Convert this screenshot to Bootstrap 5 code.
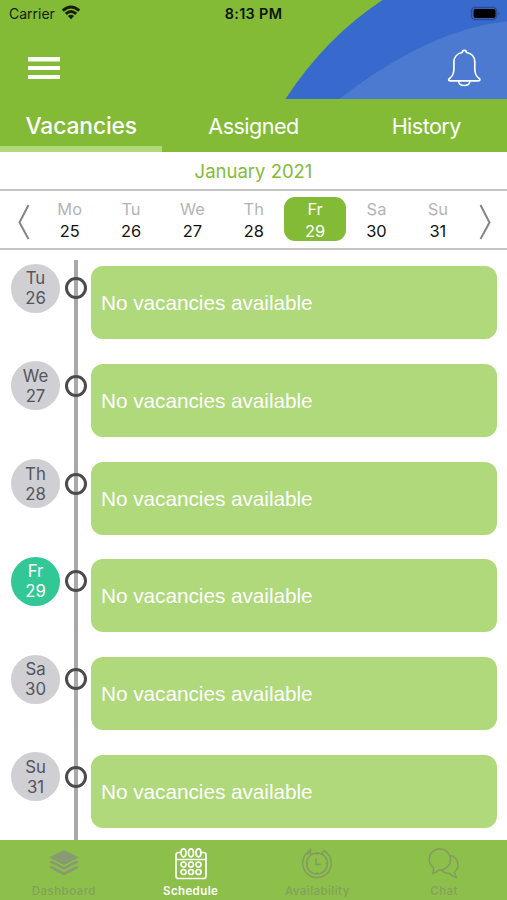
<!DOCTYPE html>
<html lang="en">
<head>
<meta charset="utf-8">
<meta name="viewport" content="width=device-width, initial-scale=1">
<title>Schedule</title>
<link href="https://cdn.jsdelivr.net/npm/bootstrap@5.3.0/dist/css/bootstrap.min.css" rel="stylesheet">
<style>
body{font-family:Inter,"Liberation Sans",sans-serif;height:900px;overflow:hidden;background:#fff;color:#111}
svg{display:block}
.app-head{height:99px;background:#83bb37}
.swoosh{right:0;top:0}
.status{height:28px;font-size:14px;line-height:28px;color:#142008}
.status .clock{width:120px;font-weight:600;font-size:14.4px;letter-spacing:.35px;color:#0c1406;padding-left:4px}
.status .side{flex:1 1 0}
.status .carrier{padding-left:9px}
.tools{height:71px;padding:0 26px 0 28px}
.tabs{height:53px;background:#83bb37;color:#fff;font-size:21.6px;line-height:54px;letter-spacing:-.55px}
.tabs .edge{width:161.5px}
.tabs .on{font-size:22.8px;font-weight:500;letter-spacing:-.1px;padding-left:1px;box-shadow:inset 0 -6px #afd97b}
.month{height:37px;line-height:38px;font-size:18.5px;color:#83bb37}
.week{height:61px;border-top:2px solid #c3c3c5;border-bottom:2px solid #c3c3c5;padding:6px 7px 0 7.5px}
.arrow{width:31.5px;padding-top:6px}
.day{height:44px;border-radius:11px;font-size:16.4px;line-height:22px;padding-top:1px;color:#111}
.day .nm{color:#b4b4b6}
.day.sel{background:#83bb37;color:#fff}
.day.sel .nm{color:#fff}
.feed{height:590px;overflow:hidden}
.rail{left:74px;top:10px;width:3.5px;height:600px;background:#a9a9a9}
.slot{height:97.75px;padding:0 10px 0 11px}
.dot{width:49px;height:49px;margin-top:13.5px;background:#d0cfd4;color:#55555a;font-size:16.8px;line-height:20px;padding-top:4.7px}
.dot.now{background:#32c896;color:#fff}
.ring{width:22px;height:22px;margin:27px 4.5px 0 4.5px;border:3px solid #4b4b4b}
.note{height:73px;margin-top:16px;border-radius:12px;background:#afd97b;color:#fff;font:20.8px "Liberation Sans",Arial,sans-serif;letter-spacing:-.05px;padding:1px 0 0 10px}
.dock{height:60px;background:#8dbf4b;color:#84a05c;font-size:11.5px;font-weight:500;line-height:14px;letter-spacing:.45px}
.dock .col{padding-left:1px}
.dock svg{margin:7px auto 3px}
.dock .on{color:#fff;font-weight:600;letter-spacing:.4px}
</style>
</head>
<body>
<header class="app-head position-relative">
  <svg class="swoosh position-absolute" width="222" height="99" viewBox="0 0 222 99"><path d="M.5 99Q40 38 97.500 0H222V99Z" fill="#386acd"/><path d="M54 99Q145 29 222 21.500V99Z" fill="#4b7ad0"/></svg>
  <div class="status d-flex position-relative">
    <div class="side d-flex"><span class="carrier">Carrier</span>
      <svg class="mt-1" width="32" height="18" viewBox="-6 0 32 18" fill="none" stroke="#142008" stroke-width="2.900"><path d="M1.800 6.700Q10-.6 18.200 6.700M4.800 9.900Q10 5.200 15.200 9.900"/><path d="M10 15.300L6.900 12Q10 9.500 13.100 12Z" fill="#142008" stroke="none"/></svg></div>
    <div class="clock text-center">8:13 PM</div>
    <div class="side d-flex justify-content-end pe-1"><svg width="33" height="28" viewBox="0 0 33 28"><rect x="1.500" y="7.500" width="25" height="12" rx="3.500" fill="none" stroke="#294c93" stroke-width="1.500"/><rect x="3.500" y="9" width="22" height="9" rx="2" fill="#000"/><path d="M28.500 11.500q2 2 0 4z" fill="#294c93"/></svg></div>
  </div>
  <div class="tools d-flex justify-content-between position-relative">
    <svg class="mt-4" width="32" height="32" viewBox="0 0 32 32" fill="#fff"><path d="M0 5h32v4.500H0zM0 14h32v4H0zM0 23h32v4H0z"/></svg>
    <svg class="bell" width="34" height="60" viewBox="0 0 34 60" fill="none" stroke="#fff" stroke-width="1.700" stroke-linejoin="round"><path d="M15.200 24.500Q15.200 22.300 17.300 22.300T19.400 24.500C25 25.500 27.800 29.500 27.800 34V41C27.800 46.500 29.500 48.500 32.700 51Q33.500 52.800 31 52.800H3.500Q1 52.800 2 51C5.200 48.500 6.900 46.500 6.900 41V34C6.900 29.500 10 25.500 15.200 24.500ZM11.500 53C12 59 22.500 59 23 53"/></svg>
  </div>
</header>
<nav class="tabs d-flex text-center">
  <div class="edge on">Vacancies</div><div class="flex-fill">Assigned</div><div class="edge">History</div>
</nav>
<div class="month text-center">January 2021</div>
<div class="week d-flex text-center">
  <div class="arrow"><svg width="31" height="38" viewBox="0 0 31 38" fill="none" stroke="#858587" stroke-width="2"><path d="M20.500 2L11.500 19.500L20.500 36"/></svg></div>
  <div class="row row-cols-7 g-0 flex-fill flex-nowrap">
    <div class="col day"><div class="nm">Mo</div>25</div>
    <div class="col day"><div class="nm">Tu</div>26</div>
    <div class="col day"><div class="nm">We</div>27</div>
    <div class="col day"><div class="nm">Th</div>28</div>
    <div class="col day sel"><div class="nm">Fr</div>29</div>
    <div class="col day"><div class="nm">Sa</div>30</div>
    <div class="col day"><div class="nm">Su</div>31</div>
  </div>
  <div class="arrow"><svg width="31" height="38" viewBox="0 0 31 38" fill="none" stroke="#858587" stroke-width="2"><path d="M11.500 2L20.500 19.500L11.500 36"/></svg></div>
</div>
<main class="feed position-relative">
  <div class="rail position-absolute"></div>
  <div class="position-relative">
    <div class="slot d-flex"><div class="dot rounded-circle text-center">Tu<br>26</div><div class="ring rounded-circle"></div><div class="note flex-fill d-flex align-items-center">No vacancies available</div></div>
    <div class="slot d-flex"><div class="dot rounded-circle text-center">We<br>27</div><div class="ring rounded-circle"></div><div class="note flex-fill d-flex align-items-center">No vacancies available</div></div>
    <div class="slot d-flex"><div class="dot rounded-circle text-center">Th<br>28</div><div class="ring rounded-circle"></div><div class="note flex-fill d-flex align-items-center">No vacancies available</div></div>
    <div class="slot d-flex"><div class="dot now rounded-circle text-center">Fr<br>29</div><div class="ring rounded-circle"></div><div class="note flex-fill d-flex align-items-center">No vacancies available</div></div>
    <div class="slot d-flex"><div class="dot rounded-circle text-center">Sa<br>30</div><div class="ring rounded-circle"></div><div class="note flex-fill d-flex align-items-center">No vacancies available</div></div>
    <div class="slot d-flex"><div class="dot rounded-circle text-center">Su<br>31</div><div class="ring rounded-circle"></div><div class="note flex-fill d-flex align-items-center">No vacancies available</div></div>
  </div>
</main>
<footer class="dock row g-0 text-center">
  <div class="col"><svg width="34" height="34" viewBox="0 0 34 34" fill="#889a72"><path d="M17 3L32 10.500L17 18L2 10.500ZM2 15L5 13.700L17 20L29 13.700L32 15L17 23ZM2 20.500L5 19L17 25.300L29 19L32 20.500L17 28.500Z"/></svg>Dashboard</div>
  <div class="col on"><svg width="34" height="34" viewBox="0 0 34 34" fill="none" stroke="#fff" stroke-width="1.700"><path d="M7 5.500H4.500Q2 5.500 2 8V29Q2 31.500 4.500 31.500H29.500Q32 31.500 32 29V8Q32 5.500 29.500 5.500H27M2 12.500H32"/><ellipse cx="9.500" cy="5.800" rx="2.500" ry="4"/><ellipse cx="17" cy="5.800" rx="2.500" ry="4"/><ellipse cx="24.500" cy="5.800" rx="2.500" ry="4"/><circle cx="9.500" cy="17.500" r="2.500"/><circle cx="17" cy="17.500" r="2.500"/><circle cx="24.500" cy="17.500" r="2.500"/><circle cx="9.500" cy="25" r="2.500"/><circle cx="17" cy="25" r="2.500"/><circle cx="24.500" cy="25" r="2.500"/></svg>Schedule</div>
  <div class="col"><svg width="34" height="34" viewBox="0 0 34 34" fill="none" stroke="#829b5f" stroke-width="1.500"><path d="M10.500 3.500A14.300 14.300 0 1 0 23.500 3.500M10.500 1.500V6.500H5.500M23.500 3.500L22 7"/><circle cx="17" cy="16.500" r="10.500"/><path d="M16 11.500V17.500H21M17 6V8M17 25V27M6.500 16.500H8.500M25.500 16.500H27.500"/></svg>Availability</div>
  <div class="col"><svg width="34" height="34" viewBox="0 0 34 34" fill="none" stroke="#829b5f" stroke-width="1.500" stroke-linejoin="round"><path d="M6 20.500A10.600 10.600 0 1 1 12 23Q9.500 25.500 5.500 26.500Q7.500 23.500 6 20.500Z"/><path d="M22.500 8.500A9.300 9.300 0 0 1 27.500 25Q27.500 28 29.500 30.500Q25.500 30 22.500 26.500Q17.500 26.500 14.500 23"/></svg>Chat</div>
</footer>
<script src="https://cdn.jsdelivr.net/npm/bootstrap@5.3.0/dist/js/bootstrap.bundle.min.js"></script>
</body>
</html>
